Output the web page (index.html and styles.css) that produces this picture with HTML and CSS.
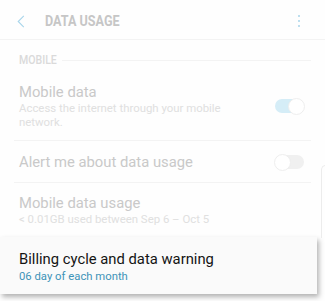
FILE: index.html
```html
<!DOCTYPE html>
<html>
<head>
<meta charset="utf-8">
<link rel="stylesheet" href="styles.css">
</head>
<body>
<div class="screen">
  <header class="appbar">
    <svg class="back" width="8" height="13" viewBox="0 0 8 13"><path d="M6.8 0.8 L1.2 6.5 L6.8 12.2" fill="none" stroke="#a8d5ea" stroke-width="1.1"/></svg>
    <div class="title"><span>DATA USAGE</span></div>
    <div class="more"><span></span><span></span><span></span></div>
  </header>
  <div class="list">
    <div class="category"><span class="cat-label">MOBILE</span><div class="rule"></div></div>
    <div class="item item-first">
      <div class="texts">
        <div class="primary">Mobile data</div>
        <div class="secondary">Access the internet through your mobile<br>network.</div>
      </div>
      <div class="switch on"><div class="knob"></div></div>
    </div>
    <div class="item item-alert">
      <div class="texts">
        <div class="primary">Alert me about data usage</div>
      </div>
      <div class="switch"><div class="knob"></div></div>
    </div>
    <div class="item item-usage">
      <div class="texts">
        <div class="primary">Mobile data usage</div>
        <div class="secondary">&lt; 0.01GB used between Sep 6 – Oct 5</div>
      </div>
    </div>
  </div>
  <div class="card">
    <div class="card-title">Billing cycle and data warning</div>
    <div class="card-sub">06 day of each month</div>
  </div>
  <div class="panel-edge"></div>
</div>
</body>
</html>
```
FILE: styles.css
```css
html, body {
  margin: 0;
  padding: 0;
  background: #fefefe;
}
.screen {
  position: relative;
  width: 325px;
  height: 301px;
  overflow: hidden;
  font-family: Roboto, "Noto Sans", sans-serif;
}
.appbar {
  height: 39px;
  border-bottom: 1px solid #f3f3f3;
  display: flex;
  align-items: center;
}
.back {
  margin-left: 17px;
  margin-top: 3px;
}
.title {
  margin-left: 20px;
  margin-top: 3px;
  font-size: 14px;
  line-height: 16px;
  font-weight: 700;
  color: #c6c6c6;
  width: 120px;
}
.title span {
  display: inline-block;
  transform: scaleX(0.9);
  transform-origin: left center;
}
.more {
  margin-left: auto;
  margin-right: 25px;
  display: flex;
  flex-direction: column;
  gap: 3px;
  margin-top: 2px;
}
.more span {
  width: 2px;
  height: 2px;
  border-radius: 50%;
  background: #a8d5ea;
}
.list {
  margin: 0 14px;
}
.category {
  display: flex;
  align-items: center;
  height: 40px;
  padding-left: 5px;
  font-size: 12px;
  font-weight: 500;
  color: #dadada;
}
.cat-label {
  display: inline-block;
  width: 38px;
  white-space: nowrap;
  transform: scaleX(0.88);
  transform-origin: left center;
}
.category .rule {
  flex: 1;
  height: 1px;
  background: #f3f3f3;
  margin-left: 5px;
}
.item {
  display: flex;
  align-items: center;
  padding-left: 5px;
  border-bottom: 1px solid #f3f3f3;
  box-sizing: border-box;
}
.item-first {
  height: 61px;
  align-items: flex-start;
  padding-top: 2px;
}
.item-first .switch {
  margin-top: 17px;
}
.item-alert {
  height: 42px;
}
.item-usage {
  height: 54px;
  align-items: flex-start;
  padding-top: 10px;
  border-bottom: none;
}
.texts {
  flex: 1;
}
.primary {
  font-size: 14.8px;
  line-height: 20px;
  color: #c9c9c9;
}
.secondary {
  font-size: 11.4px;
  line-height: 13.5px;
  color: #e0e0e0;
}
.switch {
  position: relative;
  width: 29px;
  height: 14px;
  border-radius: 7px;
  background: #f0f0f0;
  margin-right: 7px;
}
.switch.on {
  background: #d5edf7;
}
.knob {
  position: absolute;
  top: -1px;
  left: -1px;
  width: 15px;
  height: 15px;
  border-radius: 50%;
  background: #fff;
  border: 1px solid #eeeeee;
}
.switch.on .knob {
  left: auto;
  right: -1px;
}
.card {
  height: 57px;
  padding-left: 19px;
  padding-top: 12px;
  box-sizing: border-box;
  width: 317px;
  background: #fafafa;
  box-shadow: 2px 3px 5px rgba(0, 0, 0, 0.3);
}
.card-title {
  font-size: 14.8px;
  line-height: 20px;
  color: #141414;
}
.card-sub {
  font-size: 11.3px;
  line-height: 15px;
  color: #3d93b8;
}
.panel-edge {
  position: absolute;
  left: 321px;
  top: 165px;
  width: 10px;
  height: 72px;
  border-left: 1px solid #ececec;
  border-top: 1px solid #ececec;
  border-top-left-radius: 5px;
}
```
